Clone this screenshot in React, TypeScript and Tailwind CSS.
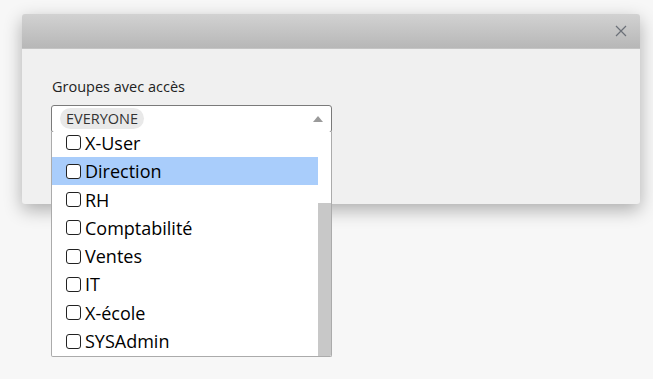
import React from 'react';

const groups = ['X-User', 'Direction', 'RH', 'Comptabilité', 'Ventes', 'IT', 'X-école', 'SYSAdmin'];

const GroupRow: React.FC<{ name: string; active?: boolean }> = ({ name, active = false }) => (
  <div className={`flex items-center h-[28.3px] pl-[14px] ${active ? 'bg-[#a9cdfb]' : ''}`}>
    <span className="w-[15px] h-[15px] border-[1.5px] border-[#222] rounded-[3px] bg-white mr-[4px] shrink-0" />
    <span className="text-[18px] text-black leading-none">{name}</span>
  </div>
);

export default function App() {
  return (
    <div className="w-[653px] h-[379px] bg-[#f7f7f7] pt-[14px] pl-[22px] font-['Open_Sans',sans-serif] overflow-hidden">
      <div className="relative w-[618px] h-[190px] rounded-[3px] bg-[#f0f0f0] shadow-[0_6px_18px_rgba(0,0,0,0.3)]">
        <div className="h-[35px] rounded-t-[3px] bg-gradient-to-b from-[#d2d2d2] to-[#b7b7b7] border-b border-[#c4c4c4] flex items-center justify-end pr-[13px]">
          <svg width="12" height="12" viewBox="0 0 12 12" className="text-[#6b7078]">
            <path d="M1 1 L11 11 M11 1 L1 11" stroke="currentColor" strokeWidth="1.2" />
          </svg>
        </div>
        <div className="pl-[29px] pt-[31px]">
          <div className="text-[14.5px] text-[#222] leading-none pl-[1px]">Groupes avec accès</div>
          <div className="relative mt-[10px] w-[281px]">
            <div className="h-[28px] bg-white border border-[#7a7a7a] rounded-[3px] flex items-center pl-[8px] pr-[8px]">
              <span className="h-[21px] px-[6px] rounded-full bg-[#e9e9e9] text-[14.5px] text-[#333] flex items-center">EVERYONE</span>
              <span className="ml-auto w-0 h-0 border-l-[5px] border-r-[5px] border-b-[6px] border-l-transparent border-r-transparent border-b-[#9a9a9a]" />
            </div>
            <div className="absolute left-0 top-[27px] w-[281px] h-[225px] bg-white border border-[#ababab] border-t-0 rounded-b-[2px] flex overflow-hidden">
              <div className="flex-1 overflow-hidden">
                <div className="mt-[-2.7px]">
                  {groups.map((g) => (
                    <GroupRow key={g} name={g} active={g === 'Direction'} />
                  ))}
                </div>
              </div>
              <div className="w-[13px] flex flex-col">
                <div className="h-[71px]" />
                <div className="flex-1 bg-[#c8c8c8]" />
              </div>
            </div>
          </div>
        </div>
      </div>
    </div>
  );
}
